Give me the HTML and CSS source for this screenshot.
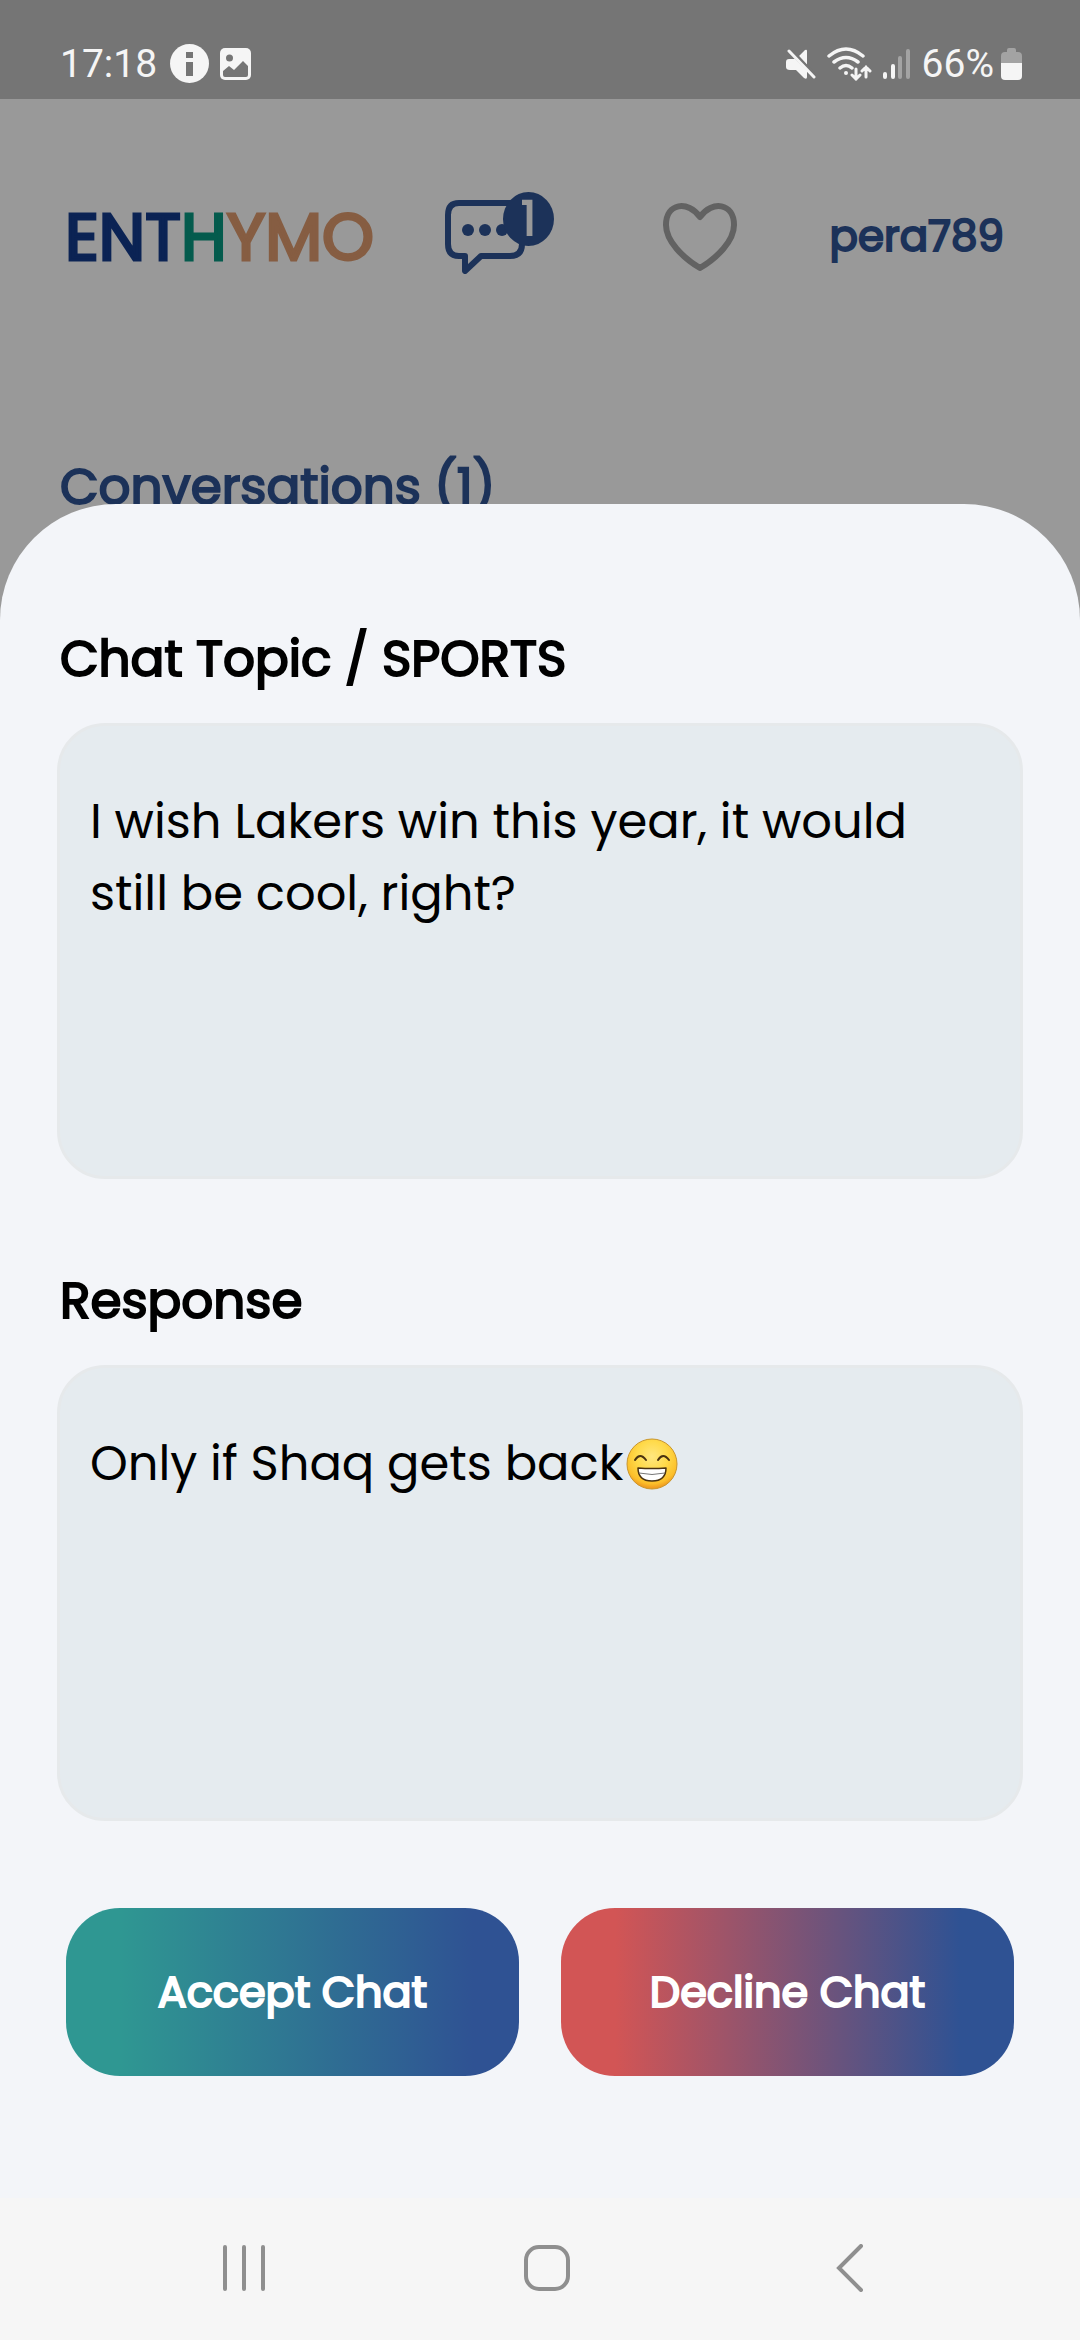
FILE: index.html
```html
<!DOCTYPE html>
<html lang="en">
<head>
<meta charset="utf-8">
<meta name="viewport" content="width=device-width, initial-scale=1">
<title>Enthymo</title>
<link rel="stylesheet" href="styles.css">
</head>
<body>
<div class="status">
  <span class="time">17:18</span>
  <svg viewBox="0 0 39 39" width="39" height="39" aria-hidden="true"><circle cx="19.500" cy="19.500" r="19.500" fill="#f5f5f5"/><path d="M16 8h7v6h-7zM16 18h7v14h-7z" fill="#757575"/></svg>
  <svg viewBox="0 0 32 32" width="32" height="32" aria-hidden="true"><rect width="31" height="32" rx="5" fill="#f5f5f5"/><circle cx="9.500" cy="10" r="3.500" fill="#757575"/><path d="M3 23l6-5 5 4 9-9 5 5v9q0 2-2 2H5q-2 0-2-2z" fill="#757575"/></svg>
  <span class="spacer"></span>
  <svg viewBox="0 0 30 30" width="30" height="30" aria-hidden="true"><path d="M13 7l6-6q2-1 2 1v14zM3 10h6l12 12v6q0 3-3 1l-8-8H4q-4 0-4-3v-5q0-3 3-3z" fill="#f5f5f5"/><path d="M5 1l25 26" stroke="#757575" stroke-width="3"/><path d="M3 2l25 26" stroke="#f5f5f5" stroke-width="3" stroke-linecap="round"/></svg>
  <svg viewBox="0 0 45 34" width="45" height="34" fill="none" stroke="#f5f5f5" stroke-width="3.500" stroke-linecap="round" aria-hidden="true"><path d="M2 9Q19-5 36 9M7 15q12-9 24 0M13 21q6-5 12 0"/><circle cx="19" cy="26" r="2" fill="#f5f5f5" stroke="none"/><path d="M29 22v10m-4-4l4 4 4-4M39 30V20m-4 4l4-4 4 4" stroke-width="3"/></svg>
  <svg viewBox="0 0 28 30" width="28" height="30" stroke-width="4" stroke-linecap="round" aria-hidden="true"><path d="M2 25v3M10 17v11" stroke="#f5f5f5"/><path d="M17 9v19M25 2v26" stroke="#a3a3a3"/></svg>
  <span class="percent">66%</span>
  <svg viewBox="0 0 21 32" width="21" height="32" aria-hidden="true"><path d="M0 16V8q0-4 4-4h2V2q0-2 2-2h5q2 0 2 2v2h2q4 0 4 4v8z" fill="#a3a3a3"/><path d="M0 15h21v13q0 4-4 4H4q-4 0-4-4z" fill="#f5f5f5"/></svg>
</div>
<main>
  <header class="header">
    <a class="logo" href="#"><span class="navy">ENT</span><span class="green">H</span><span class="brown">YMO</span></a>
    <a class="chats" href="#" aria-label="Conversations">
      <svg viewBox="0 0 80 74" width="80" height="74" fill="none" stroke="#1c3259" stroke-width="6" stroke-linejoin="round" aria-hidden="true"><path d="M14 3h51q12 0 12 12v29q0 12-12 12H36L20 71V56h-6Q3 56 3 44V15Q3 3 14 3z"/><g fill="#1c3259" stroke="none"><circle cx="23" cy="30" r="6"/><circle cx="40" cy="30" r="6"/><circle cx="57" cy="30" r="6"/></g></svg>
      <span class="badge">1</span>
    </a>
    <a href="#" aria-label="Likes"><svg viewBox="0 0 74 68" width="74" height="68" fill="none" stroke="#626262" stroke-width="6" stroke-linejoin="round" aria-hidden="true"><path d="M37 14C25-3 3 0 3 22c0 16 17 33 34 43 17-10 34-27 34-43C71 0 49-3 37 14z"/></svg></a>
    <a class="user" href="#">pera789</a>
  </header>
  <h1 class="title">Conversations (1)</h1>
</main>
<div class="sheet" role="dialog" aria-labelledby="topic">
  <h2 class="label" id="topic">Chat Topic / SPORTS</h2>
  <p class="box">I wish Lakers win this year, it would still be cool, right?</p>
  <h2 class="label">Response</h2>
  <p class="box">Only if Shaq gets back<svg class="emoji" role="img" aria-label="grinning face" viewBox="0 0 52 52" width="52" height="52"><defs><radialGradient id="face" cx=".5" cy=".35" r=".68"><stop offset="0" stop-color="#ffe780"/><stop offset=".45" stop-color="#ffda4a"/><stop offset=".8" stop-color="#fcbf2a"/><stop offset="1" stop-color="#e8851a"/></radialGradient></defs><circle cx="26" cy="26" r="25" fill="url(#face)" stroke="#c9962c"/><path d="M9 22q5-8 11 0M32 22q5-8 11 0" fill="none" stroke="#4a3210" stroke-width="2" stroke-linecap="round"/><path d="M12 30q14 1 28 0 0 13-14 13T12 30z" fill="#fff" stroke="#4a3210" stroke-width="1.500" stroke-linejoin="round"/><path d="M13 35q13 3 26 0" fill="none" stroke="#777" stroke-width="1"/></svg></p>
  <div class="actions">
    <button class="btn accept" type="button">Accept Chat</button>
    <button class="btn decline" type="button">Decline Chat</button>
  </div>
</div>
<nav class="nav" aria-label="System">
  <button type="button" aria-label="Recent apps"><svg viewBox="0 0 48 48" width="48" height="48" stroke="#8f8f8f" stroke-width="4" stroke-linecap="round" fill="none"><path d="M5 3v42M24 3v42M43 3v42"/></svg></button>
  <button type="button" aria-label="Home"><svg viewBox="0 0 48 48" width="48" height="48" stroke="#8f8f8f" stroke-width="4" fill="none"><rect x="3" y="3" width="42" height="42" rx="13"/></svg></button>
  <button type="button" aria-label="Back"><svg viewBox="0 0 48 48" width="48" height="48" stroke="#8f8f8f" stroke-width="4" stroke-linecap="round" fill="none"><path d="M35 2L13 24l22 22"/></svg></button>
</nav>
</body>
</html>
```
FILE: styles.css
```css
* { box-sizing: border-box; }
body {
  margin: 0;
  min-height: 100vh;
  display: flex;
  flex-direction: column;
  background: #999;
  font-family: Poppins, Inter, sans-serif;
  color: #000;
}
h1, h2, p { margin: 0; }
a { color: inherit; text-decoration: none; }
button { border: 0; font: inherit; }
svg { display: block; flex: none; }

.status {
  display: flex;
  align-items: center;
  gap: 11px;
  height: 99px;
  padding: 28px 58px 0 60px;
  background: #757575;
  color: #f5f5f5;
  font-family: Roboto, sans-serif;
  font-size: 39px;
  line-height: 48px;
}
.time { margin-right: 2px; }
.spacer { flex: 1; }
.percent { margin-right: -4px; }

.header {
  display: grid;
  grid-template-columns: 380px 218px auto 1fr;
  align-items: center;
  height: 276px;
  padding: 0 76px 0 65px;
}
.logo, .user, .title, .label, .btn { -webkit-text-stroke: 2px; }
.logo { font-size: 66px; line-height: 80px; -webkit-text-stroke: 3px; }
.navy { color: #0b2354; }
.green { color: #045b4d; }
.brown { color: #865d42; }
.chats { position: relative; }
.badge {
  position: absolute;
  top: -8px;
  left: 58px;
  width: 51px;
  height: 54px;
  border-radius: 50%;
  background: #1c3259;
  color: #999;
  font-size: 50px;
  line-height: 54px;
  font-weight: 500;
  text-align: center;
}
.user, .title { color: #1c3259; }
.user { font-size: 42px; line-height: 60px; text-align: right; }
.title, .label { font-size: 50px; line-height: 72px; font-weight: 400; }
.title { padding: 76px 60px 0; }

.sheet {
  position: relative;
  flex: 1;
  display: flex;
  flex-direction: column;
  margin-top: -19px;
  padding: 119px 57px 0;
  border-radius: 116px 116px 0 0;
  background: #f3f5f9;
}
.label { padding-left: 3px; }
.box {
  min-height: 456px;
  margin: 28px 0 86px;
  padding: 60px 30px;
  border: 3px solid #e6e9eb;
  border-radius: 48px;
  background: #e5ebef;
  font-size: 48px;
  line-height: 72px;
}
.emoji { display: inline-block; vertical-align: -10px; margin-left: 3px; }
.actions {
  display: grid;
  grid-template-columns: 1fr 1fr;
  gap: 42px;
  padding: 1px 9px 0;
}
.btn {
  height: 168px;
  border-radius: 54px;
  color: #fff;
  font-size: 43px;
}
.accept { background: linear-gradient(90deg, #2f9792 12%, #2f5293 90%); }
.decline { background: linear-gradient(90deg, #d25555 12%, #2f5293 88%); }

.nav {
  display: flex;
  justify-content: space-between;
  align-items: center;
  height: 142px;
  padding: 0 206px 2px 220px;
  background: #f6f6f6;
}
.nav button { padding: 0; background: none; }
```
